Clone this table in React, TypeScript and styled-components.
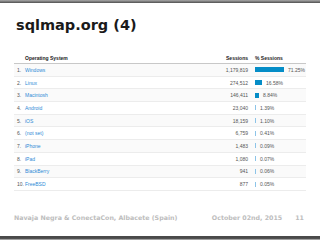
import React from 'react';
import styled, {createGlobalStyle} from 'styled-components';

const GlobalStyle = createGlobalStyle`
  html, body {
    margin: 0;
    padding: 0;
    background: #ffffff;
  }
`;

const Slide = styled.div`
  width: 320px;
  height: 240px;
  display: flex;
  flex-direction: column;
  background: #ffffff;
  overflow: hidden;
`;

const TopBar = styled.div`
  height: 3px;
  background: linear-gradient(#a8a8a8, #505050);
`;

const Title = styled.h1`
  margin: 0;
  padding: 13px 0 0 16px;
  font-family: "DejaVu Sans", sans-serif;
  font-weight: bold;
  font-size: 14.5px;
  line-height: 18px;
  color: #1a1a1a;
`;

const Table = styled.div`
  margin: 19px 14px 0 14px;
  font-family: "Liberation Sans", Arial, sans-serif;
  font-size: 5px;
  color: #555555;
`;

const Row = styled.div<{head?: boolean; shade?: boolean}>`
  display: grid;
  grid-template-columns: 8px 1fr 42px 51px;
  align-items: center;
  height: ${p => (p.head ? '11px' : '12.7px')};
  padding-left: 3px;
  box-sizing: border-box;
  border-bottom: 1px solid ${p => (p.head ? '#c8c8c8' : '#ececec')};
  background: ${p => (p.shade ? '#fafafa' : '#ffffff')};
  font-weight: ${p => (p.head ? 'bold' : 'normal')};
  color: ${p => (p.head ? '#222222' : '#555555')};
`;

const Index = styled.span`
  color: #555555;
`;

const Name = styled.span`
  color: #2d8ad6;
`;

const Sessions = styled.span`
  text-align: right;
  padding-right: 7px;
`;

const Share = styled.span`
  display: flex;
  align-items: center;
  gap: 4px;
`;

const Bar = styled.span<{thin?: boolean}>`
  display: inline-block;
  height: 5px;
  background: ${p => (p.thin ? '#8cc4e8' : '#058dc7')};
`;

const Footer = styled.div`
  margin-top: auto;
  display: flex;
  align-items: center;
  padding: 0 16px 15px 14px;
  font-family: "DejaVu Sans", sans-serif;
  font-weight: bold;
  font-size: 6.3px;
  color: #bdbdbd;
`;

const FooterLeft = styled.span`
  flex: 1;
`;

const FooterDate = styled.span`
  margin-right: 13px;
`;

const BottomBar = styled.div`
  height: 4px;
  background: linear-gradient(#4a4a4a, #4a4a4a 60%, #c8c8c8);
`;

const rows = [
  ['Windows', '1,179,819', 71.25],
  ['Linux', '274,512', 16.58],
  ['Macintosh', '146,411', 8.84],
  ['Android', '23,040', 1.39],
  ['iOS', '18,159', 1.1],
  ['(not set)', '6,759', 0.41],
  ['iPhone', '1,483', 0.09],
  ['iPad', '1,080', 0.07],
  ['BlackBerry', '941', 0.06],
  ['FreeBSD', '877', 0.05],
] as const;

export default function App() {
  return (
    <Slide>
      <GlobalStyle/>
      <TopBar/>
      <Title>sqlmap.org (4)</Title>
      <Table>
        <Row head>
          <span/>
          <span>Operating System</span>
          <Sessions>Sessions</Sessions>
          <span>% Sessions</span>
        </Row>
        {rows.map(([name, sessions, pct], i) => {
          const w = (pct / 71.25) * 29;
          return (
            <Row key={name} shade={i % 2 === 0}>
              <Index>{i + 1}.</Index>
              <Name>{name}</Name>
              <Sessions>{sessions}</Sessions>
              <Share>
                <Bar thin={w < 1} style={{width: Math.max(1, Math.round(w)) + 'px'}}/>
                {pct.toFixed(2)}%
              </Share>
            </Row>
          );
        })}
      </Table>
      <Footer>
        <FooterLeft>Navaja Negra &amp; ConectaCon, Albacete (Spain)</FooterLeft>
        <FooterDate>October 02nd, 2015</FooterDate>
        <span>11</span>
      </Footer>
      <BottomBar/>
    </Slide>
  );
}
